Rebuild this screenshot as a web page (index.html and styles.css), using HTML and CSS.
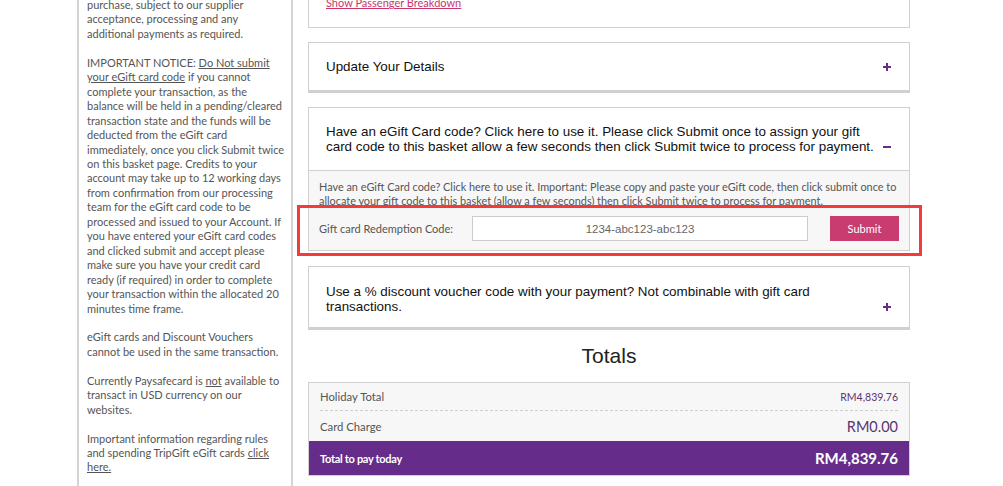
FILE: index.html
```html
<!DOCTYPE html>
<html>
<head>
<meta charset="utf-8">
<link rel="stylesheet" href="styles.css">
</head>
<body>
<div class="page">
  <aside class="sidebar">
    <p class="first">purchase, subject to our supplier acceptance, processing and any additional payments as required.</p>
    <p>IMPORTANT NOTICE: <u>Do Not submit your eGift card code</u> if you cannot complete your transaction, as the balance will be held in a pending/cleared transaction state and the funds will be deducted from the eGift card immediately, once you click Submit twice on this basket page. Credits to your account may take up to 12 working days from confirmation from our processing team for the eGift card code to be processed and issued to your Account. If you have entered your eGift card codes and clicked submit and accept please make sure you have your credit card ready (if required) in order to complete your transaction within the allocated 20 minutes time frame.</p>
    <p>eGift cards and Discount Vouchers cannot be used in the same transaction.</p>
    <p>Currently Paysafecard is <u>not</u> available to transact in USD currency on our websites.</p>
    <p>Important information regarding rules and spending TripGift eGift cards <u>click here.</u></p>
  </aside>

  <main class="main">
    <section class="panel panel-top">
      <a class="pink-link" href="#">Show Passenger Breakdown</a>
    </section>

    <section class="panel panel-thick panel-details">
      <div class="panel-head single">
        <span class="head-text">Update Your Details</span>
        <span class="icon plus"></span>
      </div>
    </section>

    <section class="panel panel-gift">
      <div class="panel-head">
        <span class="head-text wide">Have an eGift Card code? Click here to use it. Please click Submit once to assign your gift card code to this basket allow a few seconds then click Submit twice to process for payment.</span>
        <span class="icon minus"></span>
      </div>
      <div class="gift-body">
        <p class="gift-note">Have an eGift Card code? Click here to use it. Important: Please copy and paste your eGift code, then click submit once to allocate your gift code to this basket (allow a few seconds) then click Submit twice to process for payment.</p>
        <div class="gift-row">
          <label class="gift-label">Gift card Redemption Code:</label>
          <div class="gift-input">1234-abc123-abc123</div>
          <button class="gift-submit">Submit</button>
        </div>
      </div>
    </section>

    <section class="panel panel-thick panel-voucher">
      <div class="panel-head">
        <span class="head-text wide">Use a % discount voucher code with your payment? Not combinable with gift card transactions.</span>
        <span class="icon plus"></span>
      </div>
    </section>

    <h2 class="totals-title">Totals</h2>

    <div class="totals">
      <div class="trow dashed">
        <span>Holiday Total</span>
        <span class="amt small">RM4,839.76</span>
      </div>
      <div class="trow charge">
        <span>Card Charge</span>
        <span class="amt big">RM0.00</span>
      </div>
      <div class="trow grand">
        <span>Total to pay today</span>
        <span class="amt">RM4,839.76</span>
      </div>
    </div>
  </main>

  <div class="highlight"></div>
</div>
</body>
</html>
```

FILE: styles.css
```css
* { box-sizing: border-box; }

html, body {
  margin: 0;
  padding: 0;
  background: #fff;
}

.page {
  position: relative;
  display: flex;
  align-items: stretch;
  height: 486px;
  overflow: hidden;
  font-family: Lato, "Liberation Sans", sans-serif;
}

/* Sidebar */
.sidebar {
  flex: none;
  margin-left: 77px;
  width: 216px;
  border-left: 2px solid #d4d4d4;
  border-right: 2px solid #d4d4d4;
  padding: 0 5.5px 0 8px;
  color: #555;
  font-size: 11px;
  line-height: 14.45px;
}

.sidebar p {
  margin: 0 0 14.45px;
}

.sidebar p.first {
  margin-top: -2px;
}

.sidebar u {
  text-decoration: underline;
}

/* Main column */
.main {
  flex: none;
  margin-left: 15px;
  width: 602px;
  display: flex;
  flex-direction: column;
}

.main > * {
  flex: none;
}

.panel {
  border: 1px solid #d0d0d0;
  background: #fff;
}

.panel-top {
  margin-top: -20px;
  height: 48px;
  padding: 12px 17px 0;
  line-height: 15px;
}

.pink-link {
  font-size: 11px;
  color: #c9356b;
  text-decoration: underline;
}

.panel-thick {
  border-bottom-width: 3px;
}

.panel-details {
  margin-top: 14px;
}

.panel-head {
  display: flex;
  align-items: flex-end;
  justify-content: space-between;
  padding: 15px 17px 15px;
  font-family: "Liberation Sans", Arial, sans-serif;
  font-size: 13.4px;
  line-height: 15px;
  color: #111;
}

.panel-head.single {
  align-items: center;
  padding: 16px 17px 16px;
}

.head-text.wide {
  width: 550px;
}

.icon {
  position: relative;
  width: 8px;
  height: 8px;
  flex: none;
  margin-right: 1px;
  margin-bottom: 3px;
}

.single .icon {
  margin-bottom: 0;
}

.icon::before,
.icon::after {
  content: "";
  position: absolute;
  background: #6a2c8c;
}

.icon::before {
  left: 0;
  top: 3px;
  width: 8px;
  height: 2px;
}

.plus::after {
  left: 3px;
  top: 0;
  width: 2px;
  height: 8px;
}

.minus::after {
  display: none;
}

/* Gift panel */
.panel-gift {
  margin-top: 14px;
}

.panel-gift .panel-head {
  padding: 16px 17px 16px;
}

.gift-body {
  border-top: 1px solid #d0d0d0;
  background: #f7f7f7;
  padding: 9px 10px 9px;
}

.gift-note {
  margin: 0;
  font-size: 10.9px;
  line-height: 14px;
  color: #555;
  height: 28px;
  overflow: hidden;
}

.gift-row {
  display: flex;
  align-items: center;
  margin-top: 8px;
}

.gift-label {
  width: 153px;
  font-size: 11px;
  color: #555;
}

.gift-input {
  width: 336px;
  height: 25px;
  border: 1px solid #ccc;
  background: #fff;
  font-family: "Liberation Sans", Arial, sans-serif;
  font-size: 11.5px;
  color: #666;
  display: flex;
  align-items: center;
  justify-content: center;
}

.gift-submit {
  margin-left: 22px;
  width: 69px;
  height: 25px;
  border: 0;
  background: #c93c6f;
  color: #fff;
  font-family: Lato, "Liberation Sans", sans-serif;
  font-size: 11px;
  padding: 0;
}

/* Voucher panel */
.panel-voucher {
  margin-top: 15px;
}

.panel-voucher .panel-head {
  padding: 17px 17px 13px;
}

/* Totals */
.totals-title {
  margin: 14px 0 0;
  text-align: center;
  font-family: "Liberation Sans", Arial, sans-serif;
  font-weight: normal;
  font-size: 21px;
  line-height: 24px;
  color: #222;
}

.totals {
  margin-top: 14px;
  border: 1px solid #d0d0d0;
  background: #f7f7f7;
}

.trow {
  display: flex;
  justify-content: space-between;
  align-items: center;
  margin: 0 11px;
  font-size: 11.3px;
  color: #555;
}

.trow.dashed {
  height: 28px;
  border-bottom: 1px dashed #cfcfcf;
}

.trow.charge {
  height: 30px;
}

.amt {
  color: #5a3570;
}

.amt.small {
  font-size: 10.5px;
}

.amt.big {
  font-size: 14.5px;
}

.trow.grand {
  margin: 0;
  padding: 0 11px;
  height: 34px;
  background: #652d89;
  color: #fff;
  font-weight: bold;
}

.trow.grand span:first-child {
  font-size: 11px;
  letter-spacing: -0.3px;
}

.trow.grand .amt {
  color: #fff;
  font-size: 15px;
}

/* Annotation overlay */
.highlight {
  position: absolute;
  left: 297px;
  top: 205px;
  width: 625px;
  height: 51px;
  border: 3px solid #f33b3b;
  pointer-events: none;
}
```
